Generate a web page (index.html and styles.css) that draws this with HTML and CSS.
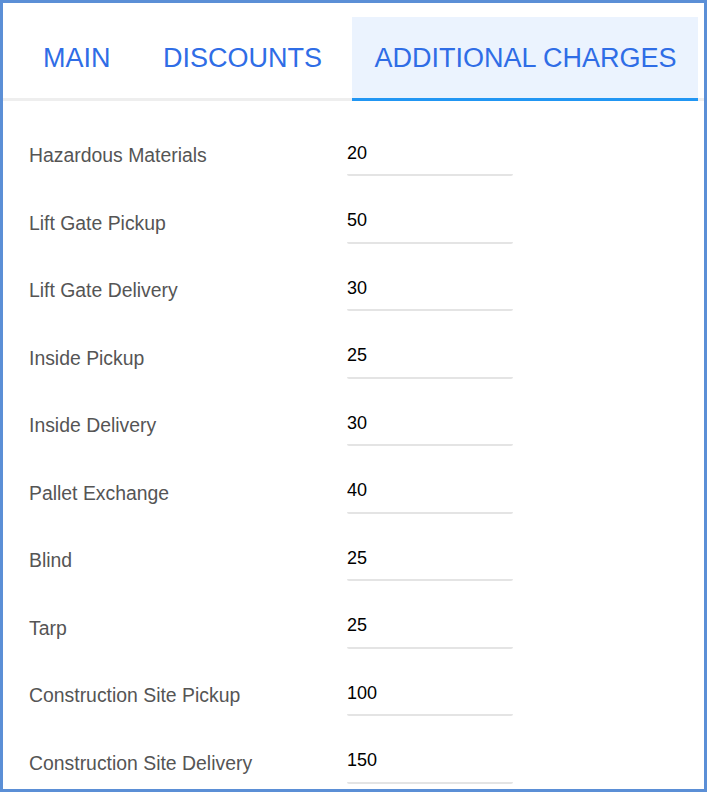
FILE: index.html
```html
<!DOCTYPE html>
<html>
<head>
<meta charset="utf-8">
<link rel="stylesheet" href="styles.css">
</head>
<body>
<div class="panel">
  <div class="tabs">
    <div class="tab">MAIN</div>
    <div class="tab">DISCOUNTS</div>
    <div class="tab active">ADDITIONAL CHARGES</div>
  </div>
  <div class="fields">
    <div class="field"><label class="label">Hazardous Materials</label><input class="value" value="20"></div>
    <div class="field"><label class="label">Lift Gate Pickup</label><input class="value" value="50"></div>
    <div class="field"><label class="label">Lift Gate Delivery</label><input class="value" value="30"></div>
    <div class="field"><label class="label">Inside Pickup</label><input class="value" value="25"></div>
    <div class="field"><label class="label">Inside Delivery</label><input class="value" value="30"></div>
    <div class="field"><label class="label">Pallet Exchange</label><input class="value" value="40"></div>
    <div class="field"><label class="label">Blind</label><input class="value" value="25"></div>
    <div class="field"><label class="label">Tarp</label><input class="value" value="25"></div>
    <div class="field"><label class="label">Construction Site Pickup</label><input class="value" value="100"></div>
    <div class="field"><label class="label">Construction Site Delivery</label><input class="value" value="150"></div>
  </div>
</div>
</body>
</html>
```
FILE: styles.css
```css
html, body {
  margin: 0;
  padding: 0;
  background: #ffffff;
}
.panel {
  width: 707px;
  height: 792px;
  box-sizing: border-box;
  border: 3px solid #5b8fd6;
  overflow: hidden;
  font-family: "Liberation Sans", Arial, sans-serif;
  background: #fff;
}
.tabs {
  display: flex;
  gap: 6.5px;
  padding: 14px 0 0 17px;
  border-bottom: 3px solid #eeeeee;
}
.tab {
  height: 84px;
  box-sizing: border-box;
  padding: 2px 23px 0;
  display: flex;
  align-items: center;
  font-size: 27px;
  color: #2f6de6;
  border-bottom: 3px solid transparent;
  margin-bottom: -3px;
}
.tab.active {
  background: #ebf3fe;
  border-bottom-color: #2196f3;
  padding-right: 21.5px;
}
.fields {
  padding: 7.5px 0 0 26px;
}
.field {
  display: flex;
  align-items: flex-end;
  height: 67.5px;
}
.label {
  width: 318px;
  font-size: 19.4px;
  line-height: 24px;
  color: #555555;
  margin-bottom: 9px;
}
.value {
  width: 166px;
  height: 38px;
  box-sizing: border-box;
  padding: 0 0 6px 0;
  margin: 0;
  border: none;
  border-bottom: 2px solid #e4e4e4;
  border-radius: 0 0 2px 2px;
  outline: none;
  background: transparent;
  font-family: "Liberation Sans", Arial, sans-serif;
  font-size: 18px;
  color: #000;
}
```
